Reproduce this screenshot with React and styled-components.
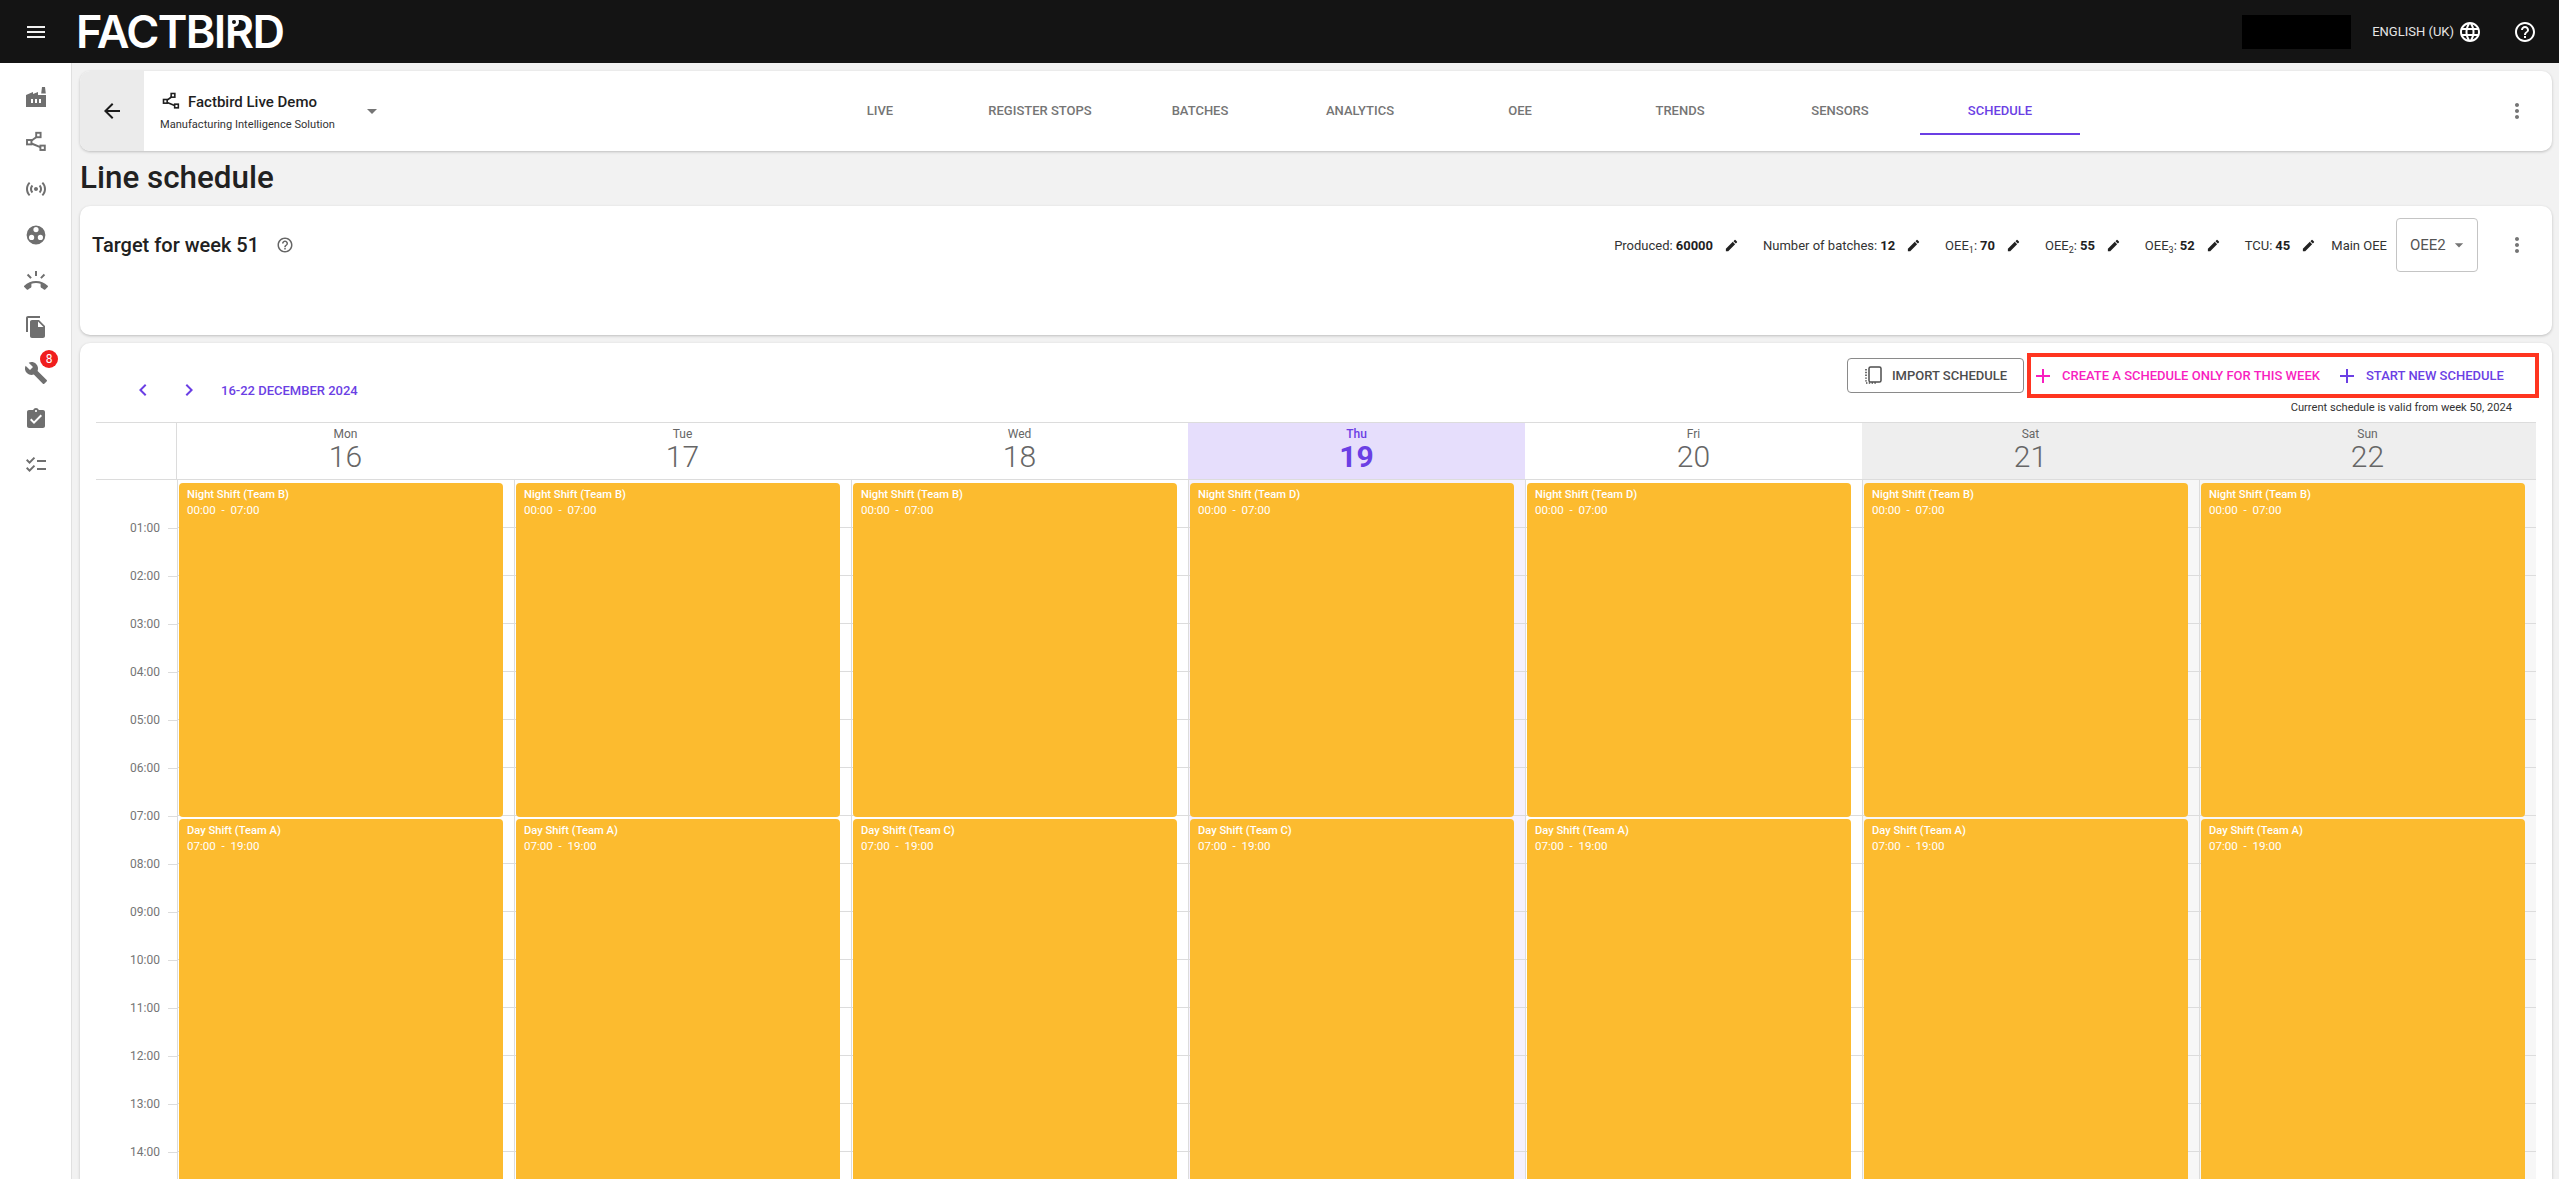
import React from 'react';
import styled, { createGlobalStyle } from 'styled-components';
import {
  MdMenu, MdArrowBack, MdArrowDropDown, MdMoreVert, MdLanguage, MdHelpOutline, MdEdit, MdAdd,
  MdChevronLeft, MdChevronRight, MdFactory, MdSensors, MdRingVolume, MdFileCopy, MdBuild,
  MdAssignmentTurnedIn, MdChecklist,
} from 'react-icons/md';

const PURPLE = '#6b3fe4';
const PINK = '#f81fc0';

const Global = createGlobalStyle`
  html, body { margin: 0; padding: 0; background: #f2f2f2; }
  body { font-family: Roboto, "Liberation Sans", sans-serif; overflow: hidden; }
  * { box-sizing: border-box; }
`;

const Page = styled.div`
  width: 2559px;
  height: 1179px;
  display: flex;
  flex-direction: column;
  overflow: hidden;
`;
const TopBar = styled.header`
  flex: 0 0 63px;
  background: #141414;
  display: flex;
  align-items: center;
  color: #fff;
`;
const MenuSlot = styled.div`
  width: 71px;
  display: flex;
  justify-content: center;
  color: #f0f0f0;
  font-size: 24px;
  line-height: 0;
`;
const Logo = styled.div`
  position: relative;
  margin-left: 5px;
  font-family: Inter, sans-serif;
  font-weight: 600;
  font-size: 45px;
  letter-spacing: -1.6px;
  line-height: 1;
  color: #fff;
`;
const BirdEye = styled.span`
  position: relative;
  &::after {
    content: '';
    position: absolute;
    width: 4px;
    height: 4px;
    border-radius: 50%;
    background: #141414;
    box-shadow: 0 0 0 3px #fff;
    left: 7px;
    top: 16px;
  }
`;
const Redacted = styled.div`
  margin-left: auto;
  width: 109px;
  height: 34px;
  background: #000;
`;
const Lang = styled.div`
  margin-left: 21px;
  display: flex;
  align-items: center;
  gap: 4px;
  font-size: 13px;
  color: #e6e6e6;
  svg { font-size: 24px; color: #fff; }
`;
const HelpSlot = styled.div`
  margin: 0 22px 0 31px;
  line-height: 0;
  font-size: 24px;
  color: #fff;
`;
const Body = styled.div`
  flex: 1;
  display: flex;
  min-height: 0;
`;
const Sidebar = styled.nav`
  flex: 0 0 72px;
  background: #fff;
  border-right: 1px solid #e0e0e0;
  padding-top: 11px;
  display: flex;
  flex-direction: column;
`;
const SideItem = styled.div`
  position: relative;
  height: 46px;
  display: flex;
  align-items: center;
  justify-content: center;
  color: #6f6f6f;
  font-size: 24px;
`;
const Badge = styled.span`
  position: absolute;
  left: 40px;
  top: 0;
  width: 18px;
  height: 18px;
  border-radius: 50%;
  background: #f01e1e;
  color: #fff;
  font-size: 12px;
  line-height: 18px;
  text-align: center;
`;
const Main = styled.main`
  flex: 1;
  min-width: 0;
  padding: 8px 7px 0 8px;
  display: flex;
  flex-direction: column;
`;
const NavCard = styled.section`
  flex: 0 0 80px;
  background: #fff;
  border-radius: 10px;
  box-shadow: 0 1px 3px rgba(0,0,0,.22);
  display: flex;
  align-items: center;
  overflow: hidden;
`;
const BackBlock = styled.div`
  width: 64px;
  align-self: stretch;
  background: #ebebeb;
  display: flex;
  align-items: center;
  justify-content: center;
  font-size: 24px;
  color: #1c1c1c;
`;
const Selector = styled.div`
  width: 656px;
  padding-left: 16px;
  display: flex;
  align-items: center;
`;
const SelectorText = styled.div`
  width: 200px;
`;
const LineTitle = styled.div`
  display: flex;
  align-items: center;
  gap: 7px;
  font-size: 15px;
  font-weight: 500;
  color: #1f1f1f;
  padding-left: 1px;
  height: 22px;
`;
const LineSub = styled.div`
  margin-top: 5px;
  font-size: 11.1px;
  color: #333;
  white-space: nowrap;
`;
const Caret = styled.div`
  line-height: 0;
  font-size: 24px;
  color: #757575;
`;
const Tabs = styled.div`
  display: flex;
`;
const Tab = styled.div`
  width: 160px;
  height: 48px;
  display: flex;
  align-items: center;
  justify-content: center;
  font-size: 13px;
  font-weight: 500;
  text-transform: uppercase;
  color: ${p => (p.$active ? PURPLE : '#757575')};
  border-bottom: 2px solid ${p => (p.$active ? PURPLE : 'transparent')};
`;
const Kebab = styled.div`
  line-height: 0;
  font-size: 24px;
  color: #757575;
  margin-left: auto;
  margin-right: 23px;
`;
const PageTitle = styled.h1`
  flex: 0 0 55px;
  margin: 0;
  font-size: 31.4px;
  font-weight: 500;
  line-height: 53px;
  color: #212121;
`;
const TargetCard = styled.section`
  flex: 0 0 129px;
  background: #fff;
  border-radius: 10px;
  box-shadow: 0 1px 3px rgba(0,0,0,.22);
  padding: 12px 23px 0 12px;
`;
const TargetRow = styled.div`
  height: 54px;
  display: flex;
  align-items: center;
`;
const TargetTitle = styled.h2`
  margin: 0;
  font-size: 20px;
  font-weight: 500;
  color: #212121;
`;
const TargetHelp = styled.span`
  margin-left: 17px;
  line-height: 0;
  font-size: 18px;
  color: #666;
`;
const Stats = styled.div`
  margin-left: auto;
  display: flex;
  align-items: center;
`;
const Stat = styled.div`
  display: flex;
  align-items: center;
  height: 24px;
  font-size: 13px;
  color: #333;
  margin-right: ${p => p.$gap}px;
  white-space: nowrap;
  b { font-weight: 700; color: #1f1f1f; margin-left: 3px; }
  sub { font-size: 9px; line-height: 0; vertical-align: -3px; }
  svg { font-size: 15px; margin-left: 11px; color: #222; }
`;
const SelectLabel = styled.div`
  font-size: 13px;
  color: #333;
  margin-right: 9px;
`;
const OeeSelect = styled.div`
  width: 82px;
  height: 54px;
  border: 1px solid #c4c4c4;
  border-radius: 4px;
  display: flex;
  align-items: center;
  padding-left: 13px;
  font-size: 15px;
  color: #555;
  svg { font-size: 20px; color: #757575; margin-left: 3px; }
`;
const StatKebab = styled.div`
  margin-left: 27px;
  line-height: 0;
  font-size: 24px;
  color: #757575;
`;
const CalendarCard = styled.section`
  margin-top: 8px;
  flex: 1;
  min-height: 0;
  background: #fff;
  border-radius: 10px 10px 0 0;
  box-shadow: 0 1px 3px rgba(0,0,0,.22);
  overflow: hidden;
  padding: 0 16px;
`;
const Toolbar = styled.div`
  height: 79px;
  display: flex;
  justify-content: space-between;
`;
const WeekNav = styled.div`
  margin-top: 35px;
  height: 24px;
  padding-left: 24px;
  display: flex;
  align-items: center;
  color: ${PURPLE};
  font-size: 13px;
  font-weight: 500;
`;
const Chevron = styled.span`
  width: 46px;
  display: flex;
  justify-content: center;
  font-size: 24px;
  line-height: 0;
`;
const WeekLabel = styled.span`
  margin-left: 9px;
  white-space: nowrap;
`;
const ToolbarRight = styled.div`
  margin-right: -3px;
  padding-top: 10px;
  display: flex;
  flex-direction: column;
  align-items: flex-end;
`;
const Actions = styled.div`
  display: flex;
  align-items: center;
  gap: 3px;
`;
const OutlineButton = styled.div`
  width: 177px;
  height: 35px;
  border: 1px solid #8a8a8a;
  border-radius: 4px;
  display: flex;
  align-items: center;
  justify-content: center;
  gap: 10px;
  font-size: 13px;
  font-weight: 500;
  color: #4d4d4d;
`;
const Highlight = styled.div`
  width: 512px;
  height: 45px;
  border: 4px solid #ff3520;
  display: flex;
  align-items: center;
`;
const AddAction = styled.div`
  display: flex;
  align-items: center;
  font-size: 13px;
  font-weight: 500;
  color: ${p => p.$color};
  margin-right: 15px;
  white-space: nowrap;
  svg { font-size: 24px; margin-right: 7px; }
`;
const ValidNote = styled.div`
  margin-top: 3px;
  margin-right: 27px;
  font-size: 11.15px;
  line-height: 14px;
  color: #333;
`;
const Grid = styled.div`
  display: grid;
  grid-template-columns: 81px repeat(7, 337px);
`;
const HeaderCorner = styled.div`
  height: 58px;
  border-top: 1px solid #dcdcdc;
  border-bottom: 1px solid #dcdcdc;
  border-right: 1px solid #dcdcdc;
`;
const DayHead = styled.div`
  height: 58px;
  border-top: 1px solid #dcdcdc;
  border-bottom: 1px solid #dcdcdc;
  background: ${p => (p.$today ? '#e6defc' : p.$weekend ? '#eeeeee' : '#fff')};
  color: ${p => (p.$today ? PURPLE : '#666')};
  display: flex;
  flex-direction: column;
  align-items: center;
  padding-top: 3px;
`;
const DayName = styled.div`
  font-size: 12px;
  line-height: 16px;
  font-weight: ${p => (p.$today ? 500 : 400)};
`;
const DayNum = styled.div`
  margin-top: -1px;
  font-size: 30px;
  line-height: 32px;
  font-weight: ${p => (p.$today ? 700 : 300)};
`;
const Gutter = styled.div`
  padding-top: 24px;
`;
const Hour = styled.div`
  height: 48px;
  display: flex;
  align-items: center;
  justify-content: flex-end;
  font-size: 12px;
  color: #757575;
  &::after {
    content: '';
    width: 9px;
    height: 1px;
    margin-left: 8px;
    background: #dcdcdc;
  }
`;
const DayColumn = styled.div`
  height: 1200px;
  border-left: 1px solid #dcdcdc;
  padding: 3px 11px 0 1px;
  display: flex;
  flex-direction: column;
  gap: 2px;
  background-color: ${p => (p.$today ? '#f5f1fe' : p.$weekend ? '#f7f7f7' : '#fff')};
  background-image: repeating-linear-gradient(to bottom, transparent 0, transparent 47px, #dcdcdc 47px, #dcdcdc 48px);
`;
const Shift = styled.div`
  flex: 0 0 ${p => p.$h}px;
  background: #fcbb2f;
  border-radius: 4px;
  padding: 4px 8px;
  color: #fff;
`;
const ShiftName = styled.div`
  font-weight: 500;
  line-height: 16px;
  font-size: 11.2px;
`;
const ShiftTime = styled.div`
  line-height: 15px;
  font-size: 11.6px;
  white-space: pre;
`;

const NodesIcon = ({ size = 24 }) => (
  <svg width={size} height={size} viewBox="0 0 24 24" fill="none" stroke="currentColor" strokeWidth="1.9">
    <path d="M12.5 6 7 10M7.5 12.5l8.8 3.6" />
    <rect x="12.2" y="1.8" width="4.4" height="4.4" />
    <rect x="3" y="9" width="4.4" height="4.4" />
    <rect x="16.4" y="14.6" width="4.4" height="4.4" />
  </svg>
);
const TripleDot = () => (
  <svg width="24" height="24" viewBox="0 0 24 24" fill="currentColor">
    <path
      fillRule="evenodd"
      d="M12 2.6a9.4 9.4 0 1 0 0 18.8 9.4 9.4 0 0 0 0-18.8zM12 4a2.6 2.6 0 1 1 0 5.2A2.6 2.6 0 0 1 12 4zM7.6 11.8a2.6 2.6 0 1 1 0 5.2 2.6 2.6 0 0 1 0-5.2zM16.4 11.8a2.6 2.6 0 1 1 0 5.2 2.6 2.6 0 0 1 0-5.2z"
    />
  </svg>
);
const ImportIcon = () => (
  <svg width="18" height="20" viewBox="0 0 18 20" fill="none" stroke="#4d4d4d">
    <rect x="5" y="1" width="12" height="15" rx="1.6" strokeWidth="1.5" />
    <path d="M2 3v14h10" strokeWidth="1.6" strokeDasharray="1.4 1.4" />
  </svg>
);

const tabs = ['Live', 'Register stops', 'Batches', 'Analytics', 'OEE', 'Trends', 'Sensors', 'Schedule'];
const days = [
  { n: 'Mon', d: 16, a: 'B', b: 'A' },
  { n: 'Tue', d: 17, a: 'B', b: 'A' },
  { n: 'Wed', d: 18, a: 'B', b: 'C' },
  { n: 'Thu', d: 19, a: 'D', b: 'C', today: true },
  { n: 'Fri', d: 20, a: 'D', b: 'A' },
  { n: 'Sat', d: 21, a: 'B', b: 'A', weekend: true },
  { n: 'Sun', d: 22, a: 'B', b: 'A', weekend: true },
];
const hours = Array.from({ length: 14 }, (_, i) => `${String(i + 1).padStart(2, '0')}:00`);

export default function App() {
  return (
    <Page>
      <Global />
      <TopBar>
        <MenuSlot><MdMenu /></MenuSlot>
        <Logo>FACTBI<BirdEye>R</BirdEye>D</Logo>
        <Redacted />
        <Lang>ENGLISH (UK)<MdLanguage /></Lang>
        <HelpSlot><MdHelpOutline /></HelpSlot>
      </TopBar>
      <Body>
        <Sidebar>
          <SideItem><MdFactory /></SideItem>
          <SideItem><NodesIcon /></SideItem>
          <SideItem><MdSensors /></SideItem>
          <SideItem><TripleDot /></SideItem>
          <SideItem><MdRingVolume /></SideItem>
          <SideItem><MdFileCopy /></SideItem>
          <SideItem><MdBuild /><Badge>8</Badge></SideItem>
          <SideItem><MdAssignmentTurnedIn /></SideItem>
          <SideItem><MdChecklist /></SideItem>
        </Sidebar>
        <Main>
          <NavCard>
            <BackBlock><MdArrowBack /></BackBlock>
            <Selector>
              <SelectorText>
                <LineTitle><NodesIcon size={20} />Factbird Live Demo</LineTitle>
                <LineSub>Manufacturing Intelligence Solution</LineSub>
              </SelectorText>
              <Caret><MdArrowDropDown /></Caret>
            </Selector>
            <Tabs>
              {tabs.map(t => <Tab key={t} $active={t === 'Schedule'}>{t}</Tab>)}
            </Tabs>
            <Kebab><MdMoreVert /></Kebab>
          </NavCard>
          <PageTitle>Line schedule</PageTitle>
          <TargetCard>
            <TargetRow>
              <TargetTitle>Target for week 51</TargetTitle>
              <TargetHelp><MdHelpOutline /></TargetHelp>
              <Stats>
                <Stat $gap={24}>Produced:<b>60000</b><MdEdit /></Stat>
                <Stat $gap={24}>Number of batches:<b>12</b><MdEdit /></Stat>
                <Stat $gap={24}><span>OEE<sub>1</sub>:</span><b>70</b><MdEdit /></Stat>
                <Stat $gap={24}><span>OEE<sub>2</sub>:</span><b>55</b><MdEdit /></Stat>
                <Stat $gap={24}><span>OEE<sub>3</sub>:</span><b>52</b><MdEdit /></Stat>
                <Stat $gap={15}>TCU:<b>45</b><MdEdit /></Stat>
                <SelectLabel>Main OEE</SelectLabel>
                <OeeSelect>OEE2<MdArrowDropDown /></OeeSelect>
                <StatKebab><MdMoreVert /></StatKebab>
              </Stats>
            </TargetRow>
          </TargetCard>
          <CalendarCard>
            <Toolbar>
              <WeekNav>
                <Chevron><MdChevronLeft /></Chevron>
                <Chevron><MdChevronRight /></Chevron>
                <WeekLabel>16-22 DECEMBER 2024</WeekLabel>
              </WeekNav>
              <ToolbarRight>
                <Actions>
                  <OutlineButton><ImportIcon />IMPORT SCHEDULE</OutlineButton>
                  <Highlight>
                    <AddAction $color={PINK}><MdAdd />CREATE A SCHEDULE ONLY FOR THIS WEEK</AddAction>
                    <AddAction $color={PURPLE}><MdAdd />START NEW SCHEDULE</AddAction>
                  </Highlight>
                </Actions>
                <ValidNote>Current schedule is valid from week 50, 2024</ValidNote>
              </ToolbarRight>
            </Toolbar>
            <Grid>
              <HeaderCorner />
              {days.map(d => (
                <DayHead key={d.n} $today={d.today} $weekend={d.weekend}>
                  <DayName $today={d.today}>{d.n}</DayName>
                  <DayNum $today={d.today}>{d.d}</DayNum>
                </DayHead>
              ))}
              <Gutter>
                {hours.map(h => <Hour key={h}>{h}</Hour>)}
              </Gutter>
              {days.map(d => (
                <DayColumn key={d.n} $today={d.today} $weekend={d.weekend}>
                  <Shift $h={334}>
                    <ShiftName>Night Shift (Team {d.a})</ShiftName>
                    <ShiftTime>00:00  -  07:00</ShiftTime>
                  </Shift>
                  <Shift $h={574}>
                    <ShiftName>Day Shift (Team {d.b})</ShiftName>
                    <ShiftTime>07:00  -  19:00</ShiftTime>
                  </Shift>
                </DayColumn>
              ))}
            </Grid>
          </CalendarCard>
        </Main>
      </Body>
    </Page>
  );
}
